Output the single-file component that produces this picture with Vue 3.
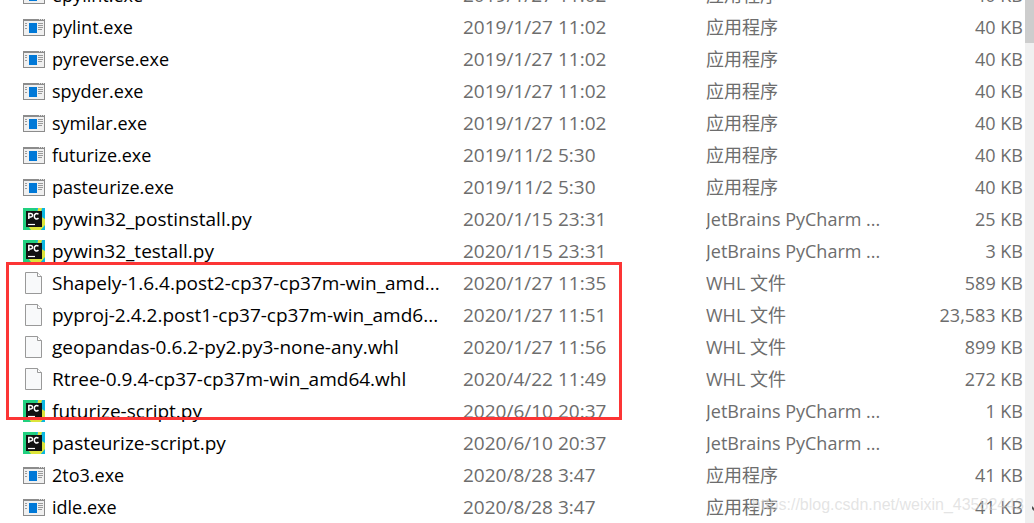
<script setup>
const app = '应用程序'
const charm = 'JetBrains PyCharm ...'
const whl = 'WHL 文件'
const files = [
  ['exe', 'epylint.exe', '2019/1/27 11:02', app, '40 KB'],
  ['exe', 'pylint.exe', '2019/1/27 11:02', app, '40 KB'],
  ['exe', 'pyreverse.exe', '2019/1/27 11:02', app, '40 KB'],
  ['exe', 'spyder.exe', '2019/1/27 11:02', app, '40 KB'],
  ['exe', 'symilar.exe', '2019/1/27 11:02', app, '40 KB'],
  ['exe', 'futurize.exe', '2019/11/2 5:30', app, '40 KB'],
  ['exe', 'pasteurize.exe', '2019/11/2 5:30', app, '40 KB'],
  ['py', 'pywin32_postinstall.py', '2020/1/15 23:31', charm, '25 KB'],
  ['py', 'pywin32_testall.py', '2020/1/15 23:31', charm, '3 KB'],
  ['doc', 'Shapely-1.6.4.post2-cp37-cp37m-win_amd...', '2020/1/27 11:35', whl, '589 KB'],
  ['doc', 'pyproj-2.4.2.post1-cp37-cp37m-win_amd6...', '2020/1/27 11:51', whl, '23,583 KB'],
  ['doc', 'geopandas-0.6.2-py2.py3-none-any.whl', '2020/1/27 11:56', whl, '899 KB'],
  ['doc', 'Rtree-0.9.4-cp37-cp37m-win_amd64.whl', '2020/4/22 11:49', whl, '272 KB'],
  ['py', 'futurize-script.py', '2020/6/10 20:37', charm, '1 KB'],
  ['py', 'pasteurize-script.py', '2020/6/10 20:37', charm, '1 KB'],
  ['exe', '2to3.exe', '2020/8/28 3:47', app, '41 KB'],
  ['exe', 'idle.exe', '2020/8/28 3:47', app, '41 KB'],
].map(([icon, name, date, type, size]) => ({ icon, name, date, type, size }))
</script>

<template>
  <main class="explorer">
    <div class="list">
      <table class="files">
        <colgroup>
          <col class="col-name" />
          <col class="col-date" />
          <col class="col-type" />
          <col class="col-size" />
        </colgroup>
        <tbody>
          <tr v-for="file in files" :key="file.name">
            <td>
              <div class="name" :class="file.icon">
                <svg v-if="file.icon === 'exe'" class="icon" viewBox="0 0 22 22" shape-rendering="crispEdges" aria-hidden="true">
                  <rect x="0" y="3" width="22" height="17" fill="#8c8c8c" />
                  <rect x="1" y="5" width="20" height="14" fill="#f0f0f0" />
                  <path d="M16 3.500h1M18 3.500h1M20 3.500h1" stroke="#dcdcdc" />
                  <rect x="6" y="7" width="8" height="10" fill="#0078d7" />
                  <path d="M2 7.500h2M2 9.500h2M2 12.500h2M15 7.500h5M15 9.500h5M15 11.500h5M15 13.500h4" stroke="#9a9a9a" />
                </svg>
                <svg v-else-if="file.icon === 'py'" class="icon" viewBox="0 0 22 22" aria-hidden="true">
                  <rect width="22" height="22" fill="#21d07f" />
                  <path d="M13 0h9v16h-5z" fill="#0bb6e0" />
                  <path d="M15 0h4l-2 8 5 3v7l-4 4H8l-3-4 12-4-3-8z" fill="#dde43a" />
                  <path d="M18 22l4-5v5z" fill="#0bb6e0" />
                  <rect x="3" y="3" width="16" height="16" fill="#111" />
                  <path d="M5.800 11V5.500h2a1.700 1.700 0 0 1 0 3.500h-2M15.500 6.300c-2-1.700-4.200-.5-4.200 1.900s2.200 3.700 4.200 1.900" fill="none" stroke="#fff" stroke-width="1.500" />
                  <path d="M5 16.500h7" stroke="#fff" stroke-width="1.200" />
                </svg>
                <svg v-else class="icon" viewBox="0 0 22 22" aria-hidden="true">
                  <path d="M2.500.5h12l4 4v17h-16z" fill="#f8f9fa" stroke="#999" />
                  <path d="M14.500.5v4h4" fill="#fff" stroke="#999" />
                </svg>
                <span>{{ file.name }}</span>
              </div>
            </td>
            <td class="meta">{{ file.date }}</td>
            <td class="meta type">{{ file.type }}</td>
            <td class="meta size">{{ file.size }}</td>
          </tr>
        </tbody>
      </table>
    </div>
    <div class="scrollbar" aria-hidden="true">
      <div class="thumb"></div>
      <svg class="arrow" viewBox="0 0 9 10"><path d="M7 3l3 3v3L7 6z" fill="#505050" /></svg>
    </div>
    <div class="highlight" aria-hidden="true"></div>
    <div class="watermark">https://blog.csdn.net/weixin_43582443</div>
  </main>
</template>

<style>
body {
  margin: 0;
  background: #fff;
}
</style>

<style scoped>
.explorer {
  position: relative;
  display: flex;
  height: 100vh;
  overflow: hidden;
  background: #fff;
  font-family: "Open Sans", "Noto Sans CJK SC", sans-serif;
  font-size: 19px;
  line-height: 32px;
  color: #000;
}
.list {
  display: flex;
  flex: 1;
  flex-direction: column;
  justify-content: flex-end;
  min-width: 0;
}
.files {
  width: 100%;
  table-layout: fixed;
  border-collapse: collapse;
}
.col-name { width: 463px; }
.col-date { width: 243px; }
.col-type { width: 200px; }
td {
  height: 32px;
  padding: 0;
  overflow: hidden;
  white-space: nowrap;
}
.name {
  display: flex;
  align-items: center;
  gap: 7px;
  height: 32px;
  padding-left: 23px;
}
.icon {
  flex: none;
  width: 22px;
  height: 22px;
}
.meta { color: #6d6d6d; }
.exe,
.type,
.size { font-size: 18px; }
.size {
  padding-right: 2px;
  text-align: right;
}
.scrollbar {
  display: flex;
  flex: none;
  flex-direction: column;
  justify-content: space-between;
  width: 9px;
  background: #f0f0f0;
}
.thumb {
  height: 43px;
  background: #cdcdcd;
}
.arrow {
  width: 9px;
  height: 10px;
  margin-bottom: 10px;
}
.highlight {
  position: absolute;
  top: 262px;
  left: 6px;
  box-sizing: border-box;
  width: 616px;
  height: 158px;
  border: 3px solid #fc3535;
}
.watermark {
  position: absolute;
  right: 10px;
  bottom: 6px;
  font-family: "Liberation Sans", Arial, sans-serif;
  font-size: 16px;
  line-height: 24px;
  color: rgba(210, 210, 210, 0.6);
}
</style>
